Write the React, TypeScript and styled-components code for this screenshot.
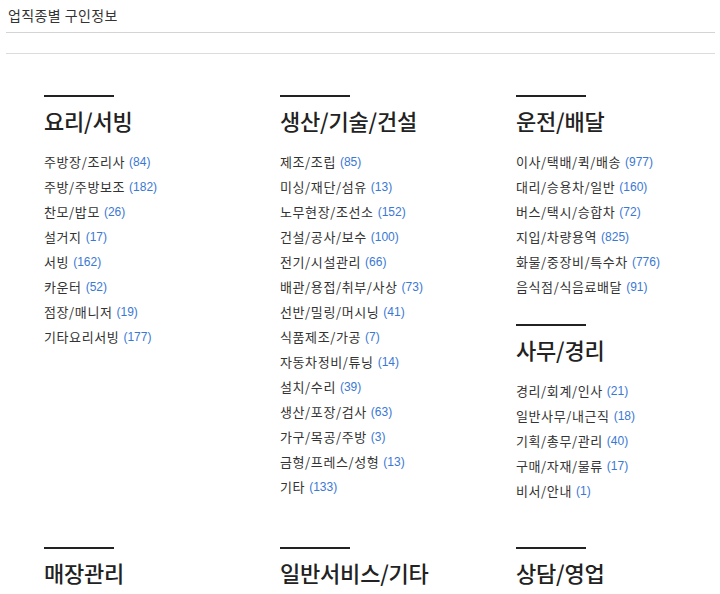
import React from 'react';
import styled, { createGlobalStyle } from 'styled-components';

type Job = { name: string; count: number };
type Section = { title: string; jobs: Job[] };

const columns: Section[][] = [
  [
    {
      title: '요리/서빙',
      jobs: [
        { name: '주방장/조리사', count: 84 },
        { name: '주방/주방보조', count: 182 },
        { name: '찬모/밥모', count: 26 },
        { name: '설거지', count: 17 },
        { name: '서빙', count: 162 },
        { name: '카운터', count: 52 },
        { name: '점장/매니저', count: 19 },
        { name: '기타요리서빙', count: 177 },
      ],
    },
  ],
  [
    {
      title: '생산/기술/건설',
      jobs: [
        { name: '제조/조립', count: 85 },
        { name: '미싱/재단/섬유', count: 13 },
        { name: '노무현장/조선소', count: 152 },
        { name: '건설/공사/보수', count: 100 },
        { name: '전기/시설관리', count: 66 },
        { name: '배관/용접/취부/사상', count: 73 },
        { name: '선반/밀링/머시닝', count: 41 },
        { name: '식품제조/가공', count: 7 },
        { name: '자동차정비/튜닝', count: 14 },
        { name: '설치/수리', count: 39 },
        { name: '생산/포장/검사', count: 63 },
        { name: '가구/목공/주방', count: 3 },
        { name: '금형/프레스/성형', count: 13 },
        { name: '기타', count: 133 },
      ],
    },
  ],
  [
    {
      title: '운전/배달',
      jobs: [
        { name: '이사/택배/퀵/배송', count: 977 },
        { name: '대리/승용차/일반', count: 160 },
        { name: '버스/택시/승합차', count: 72 },
        { name: '지입/차량용역', count: 825 },
        { name: '화물/중장비/특수차', count: 776 },
        { name: '음식점/식음료배달', count: 91 },
      ],
    },
    {
      title: '사무/경리',
      jobs: [
        { name: '경리/회계/인사', count: 21 },
        { name: '일반사무/내근직', count: 18 },
        { name: '기획/총무/관리', count: 40 },
        { name: '구매/자재/물류', count: 17 },
        { name: '비서/안내', count: 1 },
      ],
    },
  ],
  [{ title: '매장관리', jobs: [] }],
  [{ title: '일반서비스/기타', jobs: [] }],
  [{ title: '상담/영업', jobs: [] }],
];

const App = () => {
  return (
    <Page>
      <GlobalStyle />
      <Header>업직종별 구인정보</Header>
      <SubBar />
      <Grid>
        {columns.map((col, i) => (
          <Column key={i}>
            {col.map((sec) => (
              <Block key={sec.title}>
                <Rule />
                <Title>{sec.title}</Title>
                {sec.jobs.length > 0 && (
                  <List>
                    {sec.jobs.map((job) => (
                      <Item key={job.name}>
                        {job.name}
                        <Count>({job.count})</Count>
                      </Item>
                    ))}
                  </List>
                )}
              </Block>
            ))}
          </Column>
        ))}
      </Grid>
    </Page>
  );
};

const GlobalStyle = createGlobalStyle`
  body {
    margin: 0;
    background: #fff;
    font-family: "Noto Sans CJK KR", "Noto Sans", sans-serif;
    color: #333;
  }
`;

const Page = styled.div`
  width: 720px;
  height: 594px;
  overflow: hidden;
  padding: 0 5px 0 6px;
  box-sizing: border-box;
`;

const Header = styled.div`
  height: 32px;
  line-height: 30px;
  padding-left: 2px;
  font-size: 14px;
  letter-spacing: 0.4px;
  color: #333;
  border-bottom: 1px solid #d4d4d4;
`;

const SubBar = styled.div`
  height: 20px;
  border-bottom: 1px solid #dcdcdc;
`;

const Grid = styled.div`
  display: grid;
  grid-template-columns: repeat(3, 236px);
  row-gap: 44px;
  padding: 41px 0 0 38px;
`;

const Column = styled.div`
  display: flex;
  flex-direction: column;
  gap: 25px;
`;

const Block = styled.section`
  display: flex;
  flex-direction: column;
`;

const Rule = styled.div`
  width: 70px;
  height: 2px;
  background: #222;
`;

const Title = styled.h3`
  margin: 8px 0 0;
  height: 30px;
  font-size: 22px;
  line-height: 30px;
  font-weight: 500;
  color: #222;
  letter-spacing: -0.2px;
`;

const List = styled.ul`
  list-style: none;
  margin: 14px 0 0;
  padding: 0;
`;

const Item = styled.li`
  display: flex;
  align-items: center;
  height: 25px;
  font-size: 13px;
  letter-spacing: 0.6px;
  color: #333;
  white-space: nowrap;
`;

const Count = styled.span`
  margin-left: 4px;
  font-family: "Liberation Sans", Arial, sans-serif;
  font-size: 12px;
  letter-spacing: 0;
  color: #3a78d4;
`;

export default App;
